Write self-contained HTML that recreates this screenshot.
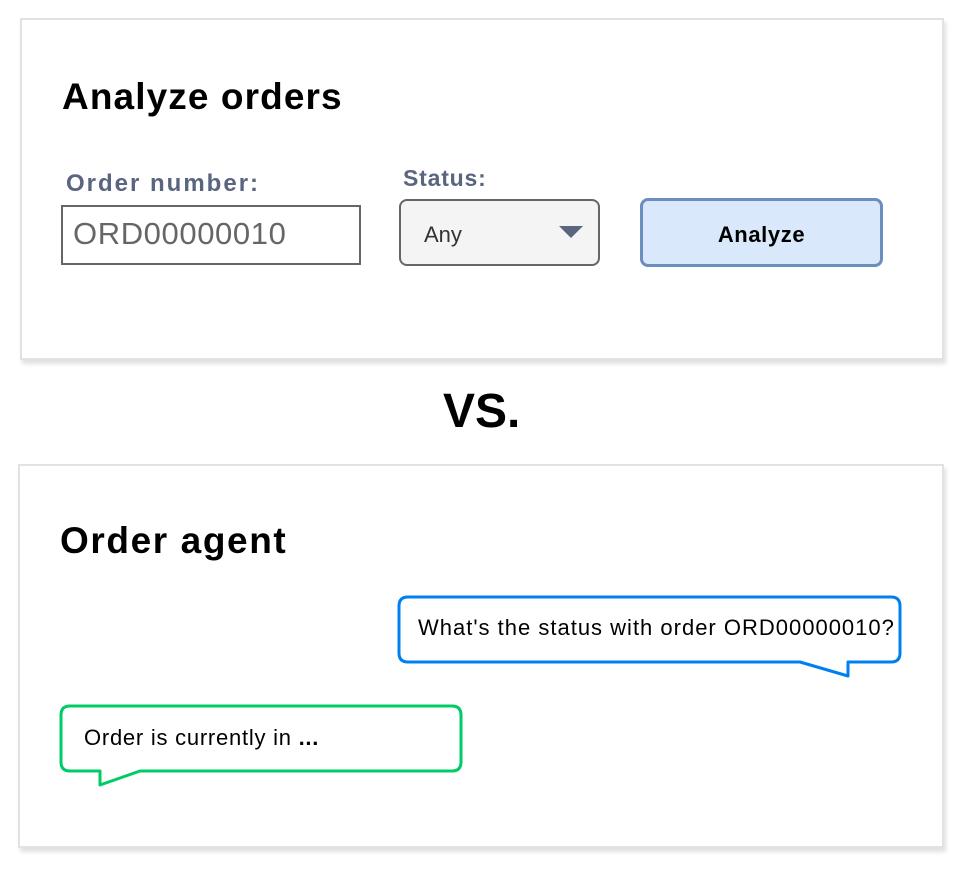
<!DOCTYPE html>
<html><head><meta charset="utf-8"><style>
body{margin:0;width:966px;height:872px;background:#fff;position:relative;overflow:hidden;font-family:"Liberation Sans",sans-serif;}
.a{position:absolute;white-space:nowrap;}
.panel{position:absolute;border:2px solid #e2e2e6;background:#fff;box-shadow:2px 4px 4px rgba(0,0,0,0.12);}
</style></head><body>
<div class="panel" style="left:20px;top:18px;width:920px;height:338px;"></div>
<div class="panel" style="left:18px;top:464px;width:922px;height:380px;"></div>

<div class="a" style="left:62px;top:76px;font-size:37px;font-weight:bold;color:#000;letter-spacing:1.1px;">Analyze orders</div>
<div class="a" style="left:66px;top:170px;font-size:24px;font-weight:bold;color:#5a6580;letter-spacing:2px;">Order number:</div>
<div class="a" style="left:61px;top:205px;border:2px solid #666;width:296px;height:56px;"></div>
<div class="a" style="left:73px;top:216px;font-size:31px;color:#666;letter-spacing:0.6px;">ORD00000010</div>
<div class="a" style="left:403px;top:165px;font-size:23px;font-weight:bold;color:#5a6580;letter-spacing:0.8px;">Status:</div>
<div class="a" style="left:399px;top:199px;width:197px;height:63px;border:2px solid #666;border-radius:8px;background:#f4f4f4;"></div>
<div class="a" style="left:424px;top:222px;font-size:22px;color:#333;">Any</div>
<svg class="a" style="left:558px;top:225px" width="26" height="14"><polygon points="1,1 25,1 13,13" fill="#5a6580"/></svg>
<div class="a" style="left:640px;top:198px;width:237px;height:63px;border:3px solid #6c8ebf;border-radius:8px;background:#dae8fc;"></div>
<div class="a" style="left:640px;top:222px;width:243px;text-align:center;font-size:22px;font-weight:bold;color:#000;letter-spacing:0.6px;">Analyze</div>

<div class="a" style="left:443px;top:384px;font-size:48px;font-weight:bold;color:#000;">VS.</div>

<div class="a" style="left:60px;top:520px;font-size:37px;font-weight:bold;color:#000;letter-spacing:1.6px;">Order agent</div>

<svg class="a" style="left:0;top:0" width="966" height="872">
<path d="M408,597 H891 Q900,597 900,606 V653 Q900,662 891,662 H848 V676 L800,662 H408 Q399,662 399,653 V606 Q399,597 408,597 Z" fill="#fff" stroke="#0080f0" stroke-width="3" stroke-linejoin="round"/>
<path d="M70,706 H452 Q461,706 461,715 V762 Q461,771 452,771 H140 L100,785 V771 H70 Q61,771 61,762 V715 Q61,706 70,706 Z" fill="#fff" stroke="#00cc66" stroke-width="3" stroke-linejoin="round"/>
</svg>
<div class="a" style="left:418px;top:615px;font-size:22px;color:#000;letter-spacing:1px;">What's the status with order ORD00000010?</div>
<div class="a" style="left:84px;top:725px;font-size:22px;color:#000;letter-spacing:0.75px;">Order is currently in <b>...</b></div>
</body></html>
